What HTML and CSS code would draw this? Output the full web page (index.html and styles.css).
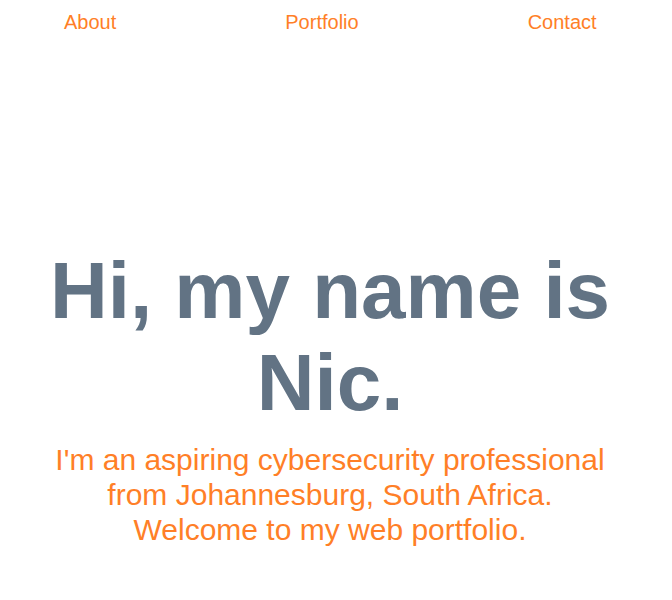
FILE: index.html
```html
<!DOCTYPE html>
<html lang="en">
<head>
<meta charset="utf-8">
<title>Nic</title>
<link rel="stylesheet" href="styles.css">
</head>
<body>
<nav class="nav">
  <a class="nav-link" href="#about">About</a>
  <a class="nav-link" href="#portfolio">Portfolio</a>
  <a class="nav-link" href="#contact">Contact</a>
</nav>
<main class="hero">
  <h1 class="hero-title">Hi, my name is Nic.</h1>
  <p class="hero-sub">I'm an aspiring cybersecurity professional from Johannesburg, South Africa. Welcome to my web portfolio.</p>
</main>
</body>
</html>
```
FILE: styles.css
```css
html, body {
  margin: 0;
  padding: 0;
  background: #ffffff;
}
body {
  font-family: "Liberation Sans", Arial, sans-serif;
}
.nav {
  display: flex;
  gap: 169px;
  padding: 11px 0 0 64px;
}
.nav-link {
  color: #ff7f27;
  font-size: 20px;
  text-decoration: none;
}
.hero {
  margin: 211px 0 0 30px;
  width: 600px;
  text-align: center;
}
.hero-title {
  margin: 0;
  font-size: 80px;
  font-weight: bold;
  line-height: 92px;
  color: #627384;
}
.hero-sub {
  margin: 13px 0 0;
  font-size: 30px;
  line-height: 35px;
  color: #ff7f27;
  padding: 0 20px;
}
```
